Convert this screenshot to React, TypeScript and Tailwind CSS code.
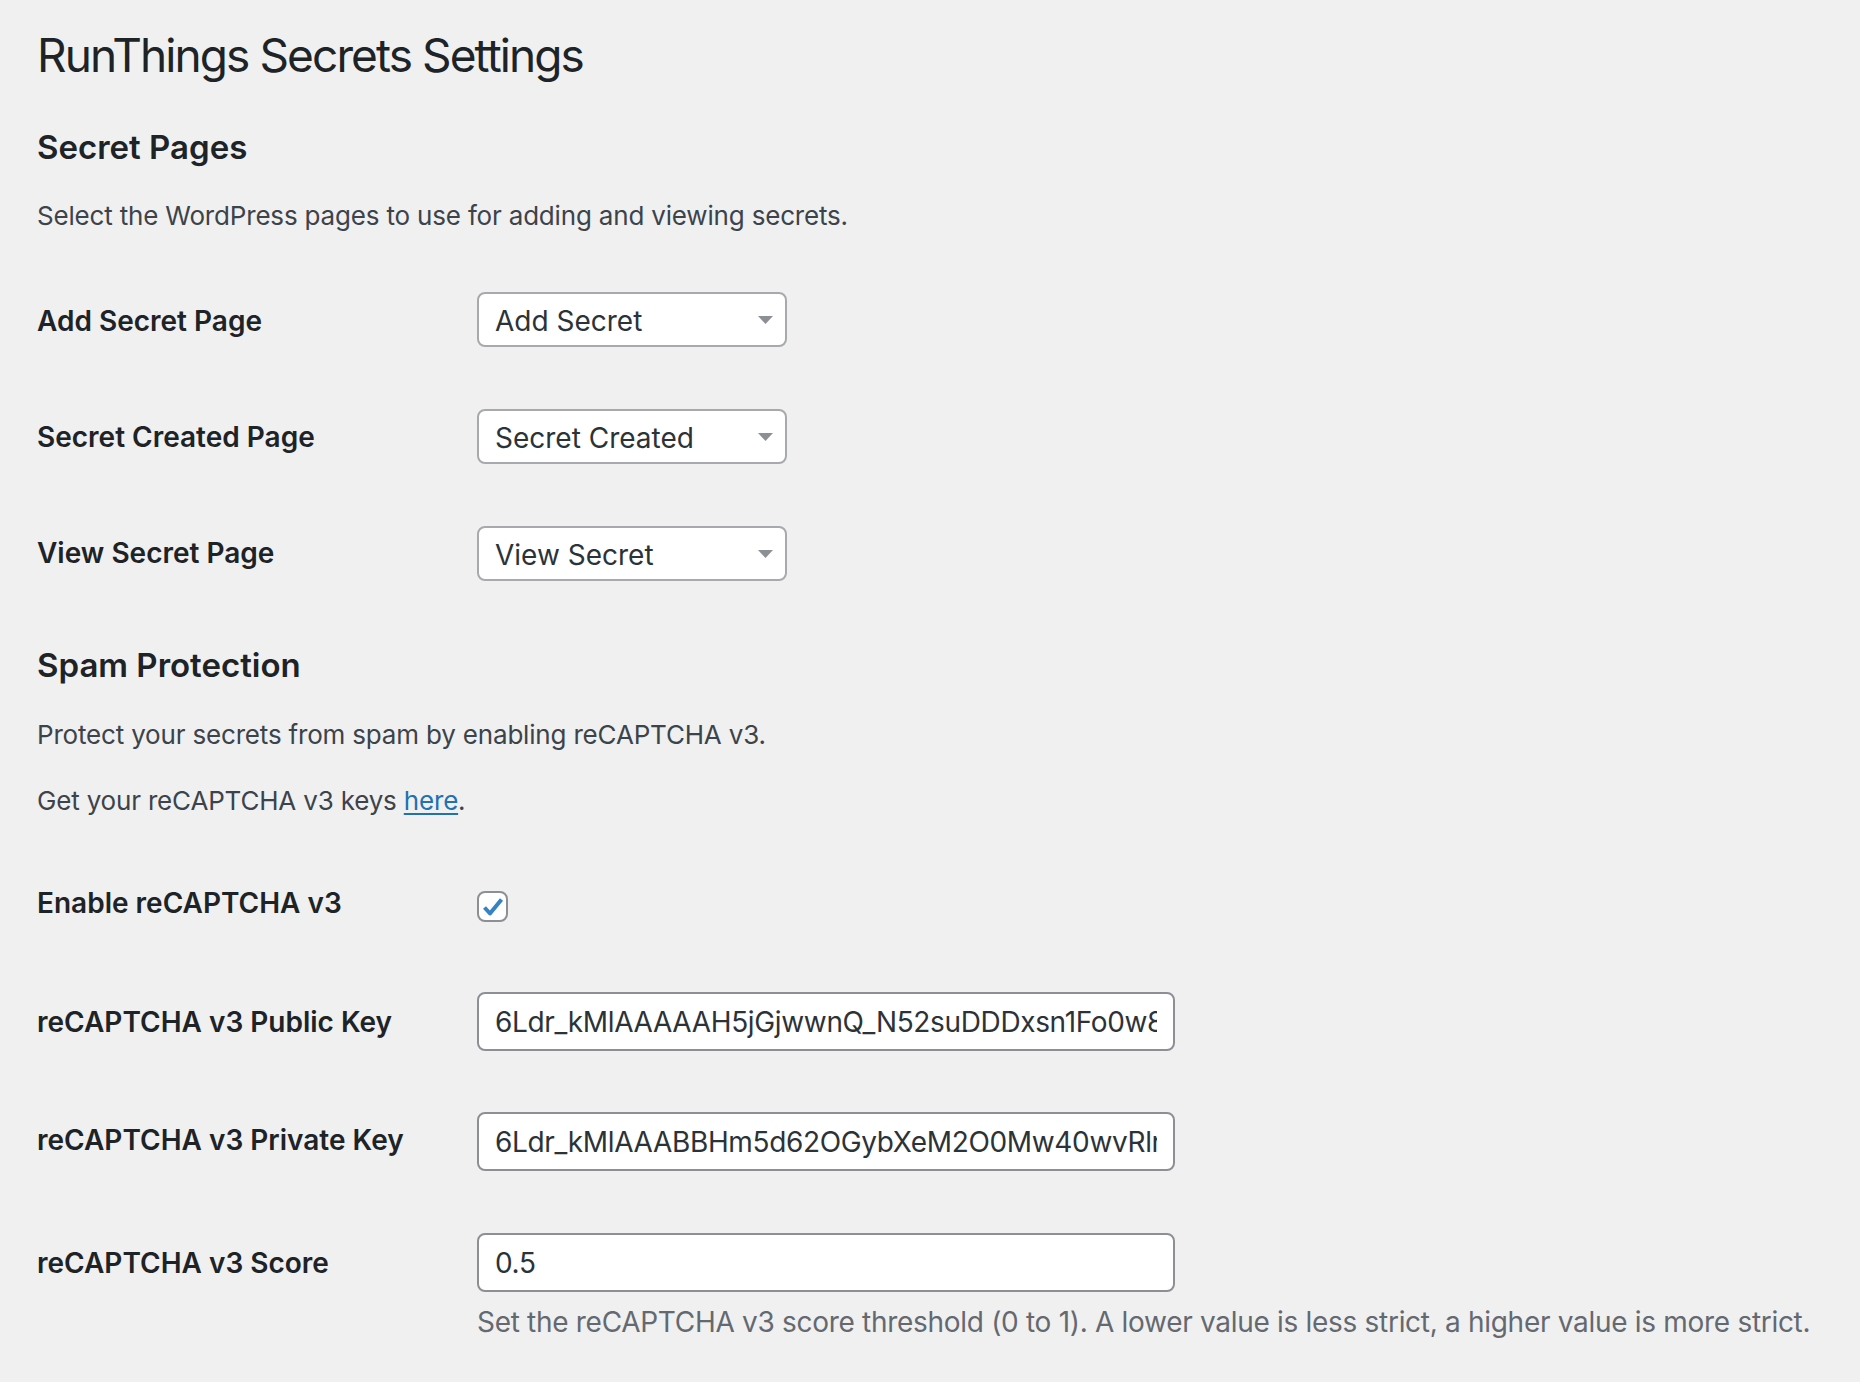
import React from 'react';

const font = "font-['Inter','Noto_Sans',sans-serif]";

function SelectBox({ value }: { value: string }) {
  return (
    <div className="relative flex h-[55px] w-[310px] items-center rounded-[8px] border-2 border-[#a7aaad] bg-white pl-[16px] pt-[3px] text-[28px] leading-[36px] text-[#2c3338]">
      <span>{value}</span>
      <svg
        className="absolute right-[12px] top-[22px]"
        width="15"
        height="8"
        viewBox="0 0 15 8"
      >
        <path d="M0 0h15L7.5 8z" fill="#8c8f94" />
      </svg>
    </div>
  );
}

function TextField({ value }: { value: string }) {
  return (
    <input
      readOnly
      value={value}
      className="h-[59px] w-[698px] rounded-[8px] border-2 border-[#8c8f94] bg-white px-[16px] text-[28px] leading-[36px] tracking-[-0.35px] text-[#2c3338] outline-none"
    />
  );
}

function Label({ children, top }: { children: React.ReactNode; top: string }) {
  return (
    <div
      className={`w-[440px] shrink-0 text-[28px] font-semibold leading-[36px] text-[#1d2327] ${top}`}
    >
      {children}
    </div>
  );
}

export default function App() {
  return (
    <div className={`min-h-screen w-full bg-[#f0f0f1] pl-[37px] pt-[25px] ${font}`}>
      <h1 className="text-[46px] font-normal leading-[60px] tracking-[-1.9px] text-[#1d2327]">
        RunThings Secrets Settings
      </h1>

      <h2 className="mt-[42px] text-[33px] font-semibold leading-[40px] text-[#1d2327]">
        Secret Pages
      </h2>
      <p className="mt-[31px] text-[26px] leading-[36px] tracking-[-0.18px] text-[#3c434a]">
        Select the WordPress pages to use for adding and viewing secrets.
      </p>

      <div className="mt-[58px] flex flex-col gap-[62px]">
        <div className="flex items-start">
          <Label top="pt-[11px]">Add Secret Page</Label>
          <SelectBox value="Add Secret" />
        </div>
        <div className="flex items-start">
          <Label top="pt-[10px]">Secret Created Page</Label>
          <SelectBox value="Secret Created" />
        </div>
        <div className="flex items-start">
          <Label top="pt-[9px]">View Secret Page</Label>
          <SelectBox value="View Secret" />
        </div>
      </div>

      <h2 className="mt-[64px] text-[33px] font-semibold leading-[40px] text-[#1d2327]">
        Spam Protection
      </h2>
      <p className="mt-[32px] text-[26px] leading-[36px] tracking-[-0.18px] text-[#3c434a]">
        Protect your secrets from spam by enabling reCAPTCHA v3.
      </p>
      <p className="mt-[30px] text-[26px] leading-[36px] tracking-[-0.18px] text-[#3c434a]">
        Get your reCAPTCHA v3 keys{' '}
        <a href="#" className="text-[#2271b1] underline underline-offset-[3px]">
          here
        </a>
        .
      </p>

      <div className="mt-[66px] flex items-start">
        <Label top="pt-0">Enable reCAPTCHA v3</Label>
        <div className="mt-[6px] flex h-[31px] w-[31px] items-center justify-center rounded-[8px] border-2 border-[#8c8f94] bg-white">
          <svg width="24" height="24" viewBox="0 0 24 24">
            <path
              d="M3.5 12.5l5.5 6 11.5-14"
              fill="none"
              stroke="#3582c4"
              strokeWidth="4"
              strokeLinejoin="round"
            />
          </svg>
        </div>
      </div>

      <div className="mt-[70px] flex items-start">
        <Label top="pt-[12px]">reCAPTCHA v3 Public Key</Label>
        <TextField value="6Ldr_kMlAAAAAH5jGjwwnQ_N52suDDDxsn1Fo0w8Qm3PzT" />
      </div>

      <div className="mt-[61px] flex items-start">
        <Label top="pt-[10px]">reCAPTCHA v3 Private Key</Label>
        <TextField value="6Ldr_kMlAAABBHm5d62OGybXeM2O0Mw40wvRlrZkA7" />
      </div>

      <div className="mt-[62px] flex items-start">
        <Label top="pt-[12px]">reCAPTCHA v3 Score</Label>
        <div className="flex flex-col">
          <TextField value="0.5" />
          <p className="mt-[12px] whitespace-nowrap text-[28px] leading-[36px] tracking-[-0.3px] text-[#646970]">
            Set the reCAPTCHA v3 score threshold (0 to 1). A lower value is less strict, a higher value is more strict.
          </p>
        </div>
      </div>
    </div>
  );
}
